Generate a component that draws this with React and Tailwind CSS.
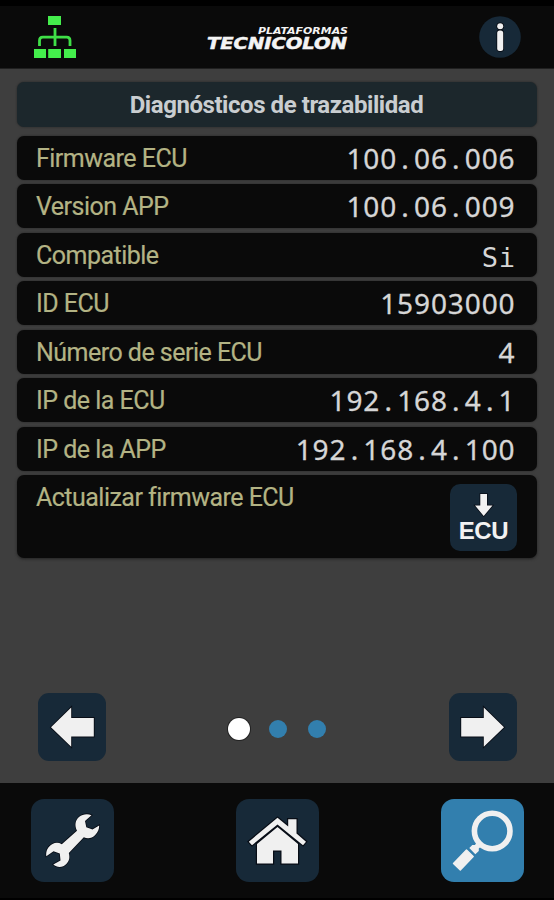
import { Fragment } from "react";

const rows = [
  { label: "Firmware ECU", value: "100.06.006" },
  { label: "Version APP", value: "100.06.009" },
  { label: "Compatible", value: "Si", mono: true },
  { label: "ID ECU", value: "15903000" },
  { label: "Número de serie ECU", value: "4" },
  { label: "IP de la ECU", value: "192.168.4.1" },
  { label: "IP de la APP", value: "192.168.4.100" },
];

function NetworkIcon() {
  return (
    <svg className="block h-[44px] w-[44px]" viewBox="0 0 44 44">
      <g fill="#44ee4c">
        <rect x="15" y="1" width="13" height="9" />
        <rect x="1" y="34" width="12" height="9" />
        <rect x="15.2" y="34" width="12.8" height="9" />
        <rect x="31" y="34" width="12" height="9" />
      </g>
      <path
        d="M22 13v18M6.500 31v-5.500q0-3.300 3.300-3.300h23.900q3.300 0 3.300 3.300V31"
        fill="none"
        stroke="#3fdf47"
        strokeWidth="2.800"
      />
    </svg>
  );
}

function Logo() {
  return (
    <svg className="block h-[40px] w-[148px]" viewBox="0 0 148 40">
      <g
        fill="#f4f4f4"
        stroke="#f4f4f4"
        fontFamily="DejaVu Sans, sans-serif"
        fontWeight="700"
        fontStyle="italic"
      >
        <text x="54" y="17" fontSize="9" strokeWidth="0" textLength="90" lengthAdjust="spacingAndGlyphs">
          PLATAFORMAS
        </text>
        <text x="3" y="31.500" fontSize="15" strokeWidth="0.500" textLength="140" lengthAdjust="spacingAndGlyphs">
          TECNICOLON
        </text>
      </g>
    </svg>
  );
}

function InfoIcon() {
  return (
    <svg className="block h-[42px] w-[42px]" viewBox="0 0 42 42">
      <circle cx="21" cy="21" r="20.800" fill="#172938" />
      <g stroke="#05080f" strokeWidth="1.500" fill="#f1f1f1" paintOrder="stroke">
        <circle cx="21.200" cy="10.200" r="3" />
        <rect x="18.200" y="14.500" width="6" height="20.500" rx="2.500" />
      </g>
    </svg>
  );
}

function ArrowIcon({ flip }) {
  return (
    <svg
      className={`block h-[68px] w-[68px] ${flip ? "-scale-x-100" : ""}`}
      viewBox="0 0 68 68"
    >
      <path
        d="M13 34.300L33.200 14.500V25H55.800V43.500H33.200V53.700Z"
        fill="#f0f0f0"
        stroke="#080d16"
        strokeWidth="1.800"
        paintOrder="stroke"
      />
    </svg>
  );
}

function WrenchIcon() {
  return (
    <svg className="block h-[83px] w-[83px]" viewBox="0 0 83 83">
      <path
        d="M60.500 16.200C56 14.300 51.500 15.300 48 18C44.300 21 43.300 26.500 46 31.700L30.800 45.200C27.500 43.300 24.500 43.300 21.500 45C17 47.500 14.700 51.500 15.300 57.200L22.500 52.300L28.800 54.500L29.500 61.500L22.300 65.500C26 69 32 68.800 35.300 65C38.500 61.500 39 58.500 37.800 54L52.800 38.300C57 40.300 61 39.300 64.200 36C67 33 68.300 30 68.200 26.500L61.500 30.500L55.300 28.300L54 22Z"
        fill="#f0f0f0"
        stroke="#080d16"
        strokeWidth="1.600"
        paintOrder="stroke"
      />
    </svg>
  );
}

function HomeIcon() {
  return (
    <svg className="block h-[83px] w-[83px]" viewBox="0 0 83 83">
      <g fill="#f0f0f0" stroke="#080d16" strokeWidth="2.400" paintOrder="stroke">
        <path d="M21 45L41.500 28L62 45V64.600H45.500V51.500H37V64.600H21Z" />
        <path d="M12.800 42.700L41.500 18.700L52.200 27.500V20.300H60.500V34.500L70 42.700L67 46.200L41.500 25.500L16 46.200Z" />
      </g>
    </svg>
  );
}

function SearchIcon() {
  return (
    <svg className="block h-[83px] w-[83px]" viewBox="0 0 83 83">
      <circle cx="51.200" cy="32" r="17.800" fill="none" stroke="#f0f0f0" strokeWidth="5.600" />
      <path d="M35.500 43.500L39.700 47.700L37.800 49.500V52L34.300 55.300L28.300 49L31.300 46H34Z" fill="#f0f0f0" />
      <path
        d="M25.500 51L32.200 57.500L19.300 71L12.500 64.500Z"
        fill="#f0f0f0"
        stroke="#f0f0f0"
        strokeWidth="1.400"
        strokeLinejoin="round"
      />
    </svg>
  );
}

// Digits are tracked to a fixed pitch, dots get a full cell of their own
function Value({ text, mono }) {
  if (mono) {
    return (
      <span className="pt-[3px] font-['DejaVu_Sans_Mono',monospace] text-[27px] leading-[44px] tracking-[0.6px] text-[#d6d6d6]">
        {text}
      </span>
    );
  }
  return (
    <span className="font-['Noto_Sans',sans-serif] text-[28px] leading-[44px] tracking-[0.9px] text-[#d6d6d6] [-webkit-text-stroke:0.3px_#d6d6d6]">
      {text.split(".").map((part, i) => (
        <Fragment key={i}>
          {i > 0 && <span className="inline-block w-[16.9px] text-center">.</span>}
          {part}
        </Fragment>
      ))}
    </span>
  );
}

function Label({ children }) {
  return (
    <span className="text-[25px] leading-[46px] tracking-[-0.52px] text-[#b3b384] [-webkit-text-stroke:0.2px_#b3b384]">
      {children}
    </span>
  );
}

export default function App() {
  return (
    <div className="flex h-[900px] w-[554px] flex-col overflow-hidden bg-[#3e3e3e] font-[Roboto,sans-serif]">
      {/* Header */}
      <header className="flex h-[69px] shrink-0 items-center justify-between border-t-[6px] border-b border-t-black border-b-[#202020] bg-[#0a0a0a] pr-[33px] pl-[33px]">
        <NetworkIcon />
        <Logo />
        <InfoIcon />
      </header>

      {/* Diagnostics */}
      <main className="flex flex-1 flex-col pr-[17.5px] pl-[16.5px] pt-[12.5px]">
        <h1 className="h-[45px] rounded-[7px] bg-[#1c272c] text-center text-[24px] leading-[47px] font-bold tracking-[-0.44px] text-[#c9cdd0] shadow-[0_0_2px_#222]">
          Diagnósticos de trazabilidad
        </h1>

        <div className="mt-[9px] flex flex-col gap-[4.5px]">
          {rows.map((row) => (
            <div
              key={row.label}
              className="flex h-[44px] items-start justify-between rounded-[7px] bg-[#0a0a0a] pr-[21px] pl-[19.5px] shadow-[0_0_2px_#222]"
            >
              <Label>{row.label}</Label>
              <Value text={row.value} mono={row.mono} />
            </div>
          ))}
          <div className="flex h-[83px] items-start justify-between rounded-[7px] bg-[#0a0a0a] pr-[19.5px] pl-[19.5px] shadow-[0_1px_3px_#222]">
            <Label>Actualizar firmware ECU</Label>
            <button className="mt-[9px] flex h-[67px] w-[67px] flex-col items-center rounded-[10px] bg-[#172938] pt-[9px]">
              <svg className="block h-[24px] w-[22px]" viewBox="0 0 22 24">
                <path
                  d="M7.300 1H14V12.500H19.500L10.700 23L2 12.500H7.300Z"
                  fill="#f2f2f2"
                  stroke="#080d16"
                  strokeWidth="1.500"
                  paintOrder="stroke"
                />
              </svg>
              <span className="font-['Liberation_Sans',sans-serif] text-[24px] leading-[27px] font-bold tracking-[-0.4px] text-[#f2f2f2]">
                ECU
              </span>
            </button>
          </div>
        </div>

        {/* Pager */}
        <div className="mt-auto mb-[22px] flex items-center justify-between pr-[19.5px] pl-[21px]">
          <button className="h-[68px] w-[68px] rounded-[11px] bg-[#172938]">
            <ArrowIcon />
          </button>
          <div className="flex items-center gap-[21px] pt-[3px]">
            <span className="h-[22px] w-[22px] rounded-full bg-white shadow-[0_0_0_1px_#222]" />
            <span className="-ml-[2px] h-[18px] w-[18px] rounded-full bg-[#327fae]" />
            <span className="h-[18px] w-[18px] rounded-full bg-[#327fae]" />
          </div>
          <button className="h-[68px] w-[68px] rounded-[11px] bg-[#172938]">
            <ArrowIcon flip />
          </button>
        </div>
      </main>

      {/* Bottom navigation */}
      <nav className="flex h-[117px] shrink-0 items-start justify-between border-b-2 border-black bg-[#0a0a0a] pr-[30.5px] pl-[31px] pt-[16px]">
        <button className="h-[83px] w-[83px] rounded-[13px] bg-[#172938]">
          <WrenchIcon />
        </button>
        <button className="h-[83px] w-[83px] rounded-[13px] bg-[#172938]">
          <HomeIcon />
        </button>
        <button className="h-[83px] w-[83px] rounded-[13px] bg-[#327fae]">
          <SearchIcon />
        </button>
      </nav>
    </div>
  );
}
